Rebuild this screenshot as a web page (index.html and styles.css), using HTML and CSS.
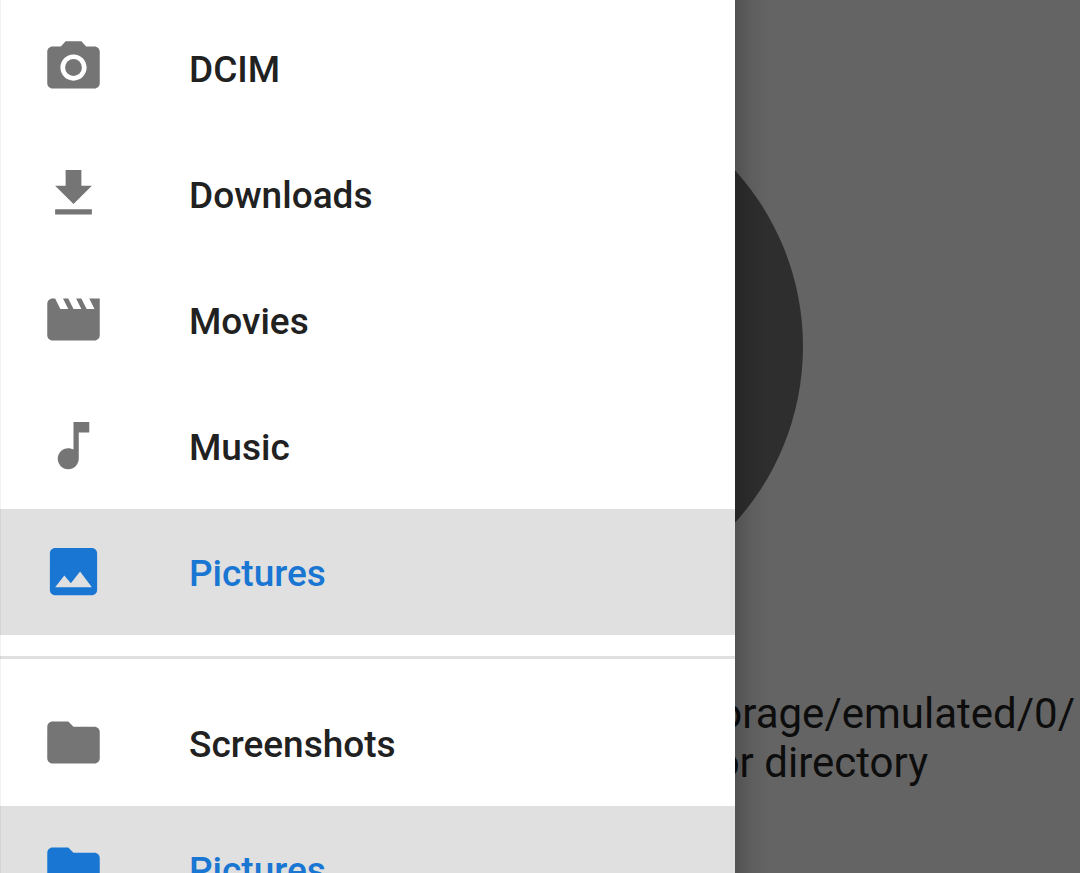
FILE: index.html
```html
<!DOCTYPE html>
<html lang="en">
<head>
<meta charset="utf-8">
<meta name="viewport" content="width=device-width, initial-scale=1">
<title>Folders</title>
<link rel="stylesheet" href="styles.css">
</head>
<body>
<div class="app">
  <main class="content">
    <div class="disc"></div>
    <p class="message">
      <span class="line line-path">storage/emulated/0/</span>
      <span class="line line-reason">or directory</span>
    </p>
  </main>
  <div class="scrim"></div>
  <nav class="drawer">
    <ul class="group">
      <li><a class="item" href="#dcim">
        <svg class="icon" viewBox="0 0 24 24"><circle cx="12" cy="12" r="3.2"/><path d="M9 2 7.170 4H4c-1.100 0-2 .9-2 2v12c0 1.100.9 2 2 2h16c1.100 0 2-.9 2-2V6c0-1.100-.9-2-2-2h-3.170L15 2H9zm3 15c-2.760 0-5-2.240-5-5s2.240-5 5-5 5 2.240 5 5-2.240 5-5 5z"/></svg>
        <span>DCIM</span></a></li>
      <li><a class="item" href="#downloads">
        <svg class="icon" viewBox="0 0 24 24"><path d="M19 9h-4V3H9v6H5l7 7 7-7zM5 18v2h14v-2H5z"/></svg>
        <span>Downloads</span></a></li>
      <li><a class="item" href="#movies">
        <svg class="icon" viewBox="0 0 24 24"><path d="m18 4 2 4h-3l-2-4h-2l2 4h-3l-2-4H8l2 4H7L5 4H4c-1.100 0-1.990.9-1.990 2L2 18c0 1.100.9 2 2 2h16c1.100 0 2-.9 2-2V4h-4z"/></svg>
        <span>Movies</span></a></li>
      <li><a class="item" href="#music">
        <svg class="icon" viewBox="0 0 24 24"><path d="M12 3v10.550c-.59-.34-1.270-.55-2-.55-2.210 0-4 1.790-4 4s1.790 4 4 4 4-1.790 4-4V7h4V3h-6z"/></svg>
        <span>Music</span></a></li>
      <li><a class="item selected" href="#pictures">
        <svg class="icon" viewBox="0 0 24 24"><path d="M21 19V5c0-1.100-.9-2-2-2H5c-1.100 0-2 .9-2 2v14c0 1.100.9 2 2 2h14c1.100 0 2-.9 2-2zM8.500 13.500l2.500 3.010L14.500 12l4.500 6H5l3.500-4.500z"/></svg>
        <span>Pictures</span></a></li>
    </ul>
    <ul class="group bookmarks">
      <li><a class="item" href="#screenshots">
        <svg class="icon" viewBox="0 0 24 24"><path d="M10 4H4c-1.100 0-1.990.9-1.990 2L2 18c0 1.100.9 2 2 2h16c1.100 0 2-.9 2-2V8c0-1.100-.9-2-2-2h-8l-2-2z"/></svg>
        <span>Screenshots</span></a></li>
      <li><a class="item selected" href="#bookmark-pictures">
        <svg class="icon" viewBox="0 0 24 24"><path d="M10 4H4c-1.100 0-1.990.9-1.990 2L2 18c0 1.100.9 2 2 2h16c1.100 0 2-.9 2-2V8c0-1.100-.9-2-2-2h-8l-2-2z"/></svg>
        <span>Pictures</span></a></li>
    </ul>
  </nav>
</div>
</body>
</html>
```
FILE: styles.css
```css
* {
  box-sizing: border-box;
}

body {
  margin: 0;
  font-family: Roboto, "Noto Sans", sans-serif;
}

.app {
  position: relative;
  height: 100vh;
  overflow: hidden;
  background: #fafafa;
}

.content {
  display: flex;
  flex-direction: column;
  align-items: center;
  gap: 80px;
  padding-top: 84px;
}

.disc {
  width: 525px;
  height: 525px;
  border-radius: 50%;
  background: #747474;
}

.message {
  width: 100%;
  margin: 0;
  color: #212121;
  font-size: 42px;
  line-height: 49px;
  text-align: right;
}

.line {
  display: block;
}

.line-path {
  padding-right: 5px;
}

.line-reason {
  padding-right: 152px;
}

.scrim {
  position: absolute;
  inset: 0;
  background: rgba(0, 0, 0, 0.6);
}

.drawer {
  position: absolute;
  top: 0;
  bottom: 0;
  left: 0;
  width: 735px;
  max-width: 85%;
  padding-top: 5px;
  background: #fff;
}

/* Hairline along the window edge */
.drawer::before {
  content: "";
  position: absolute;
  inset: 0 auto 0 0;
  width: 1px;
  background: rgba(0, 0, 0, 0.05);
  z-index: 1;
}

.drawer::after {
  content: "";
  position: absolute;
  top: 0;
  bottom: 0;
  left: 100%;
  width: 34px;
  background: linear-gradient(to right, rgba(0, 0, 0, 0.19), rgba(0, 0, 0, 0.07) 45%, rgba(0, 0, 0, 0));
}

.group {
  margin: 0;
  padding: 0;
  list-style: none;
}

.bookmarks {
  margin-top: 21px;
  padding-top: 21px;
  border-top: 3px solid #e0e0e0;
}

.item {
  display: flex;
  align-items: flex-start;
  gap: 84px;
  height: 126px;
  padding: 31px 42px 0;
  color: #212121;
  font-size: 37px;
  font-weight: 500;
  line-height: 68px;
  text-decoration: none;
}

.icon {
  flex: none;
  width: 63px;
  height: 63px;
  fill: #757575;
}

.selected {
  background: #e0e0e0;
  color: #1976d2;
}

.selected .icon {
  fill: #1976d2;
}
```
